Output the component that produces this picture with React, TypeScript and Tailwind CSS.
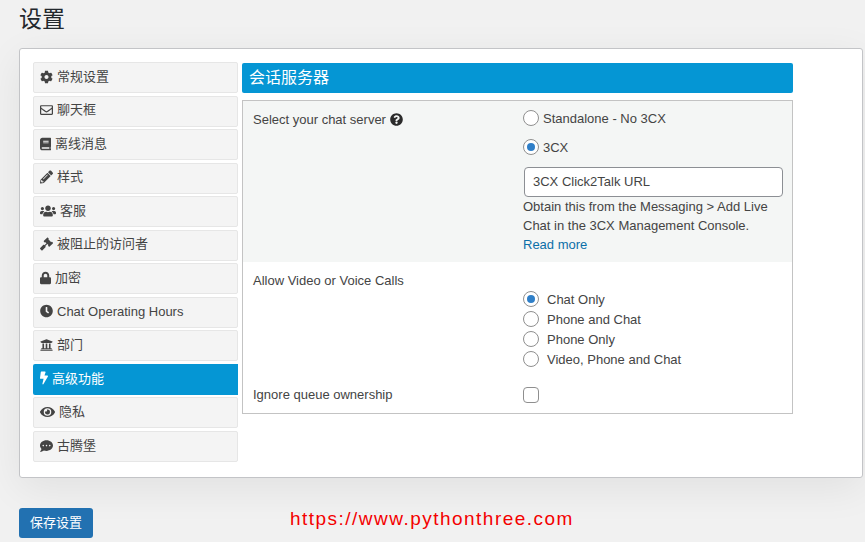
import { FaCog, FaRegEnvelope, FaBook, FaPencilAlt, FaUsers, FaGavel, FaLock, FaClock, FaUniversity, FaBolt, FaEye, FaCommentDots, FaQuestionCircle } from 'react-icons/fa';

const TABS = [
  { label: '常规设置', icon: FaCog, size: 'w-[13px] h-[14px]' },
  { label: '聊天框', icon: FaRegEnvelope, size: 'w-[13px] h-[14px]' },
  { label: '离线消息', icon: FaBook, size: 'w-[11px] h-[14px]' },
  { label: '样式', icon: FaPencilAlt, size: 'w-[13px] h-[14px]' },
  { label: '客服', icon: FaUsers, size: 'w-[16px] h-[14px]' },
  { label: '被阻止的访问者', icon: FaGavel, size: 'w-[13px] h-[14px]' },
  { label: '加密', icon: FaLock, size: 'w-[11px] h-[14px]' },
  { label: 'Chat Operating Hours', icon: FaClock, size: 'w-[13px] h-[14px]' },
  { label: '部门', icon: FaUniversity, size: 'w-[13px] h-[14px]' },
  { label: '高级功能', icon: FaBolt, size: 'w-[8px] h-[14px]', active: true },
  { label: '隐私', icon: FaEye, size: 'w-[15px] h-[14px]' },
  { label: '古腾堡', icon: FaCommentDots, size: 'w-[13px] h-[14px]' },
];

function Radio({ checked = false }: { checked?: boolean }) {
  return (
    <span className="flex h-4 w-4 shrink-0 items-center justify-center rounded-full border border-[#8f8f8f] bg-white">
      {checked && <span className="h-2 w-2 rounded-full bg-[#2f7fc8]" />}
    </span>
  );
}

export default function App() {
  return (
    <div
      className="h-[542px] w-[865px] overflow-hidden bg-[#f1f1f1] text-[13px] text-[#444]"
      style={{ fontFamily: '"Liberation Sans", "Noto Sans CJK SC", sans-serif' }}
    >
      <h1 className="ml-[19px] pt-[4px] text-[23px] leading-[31px] text-[#23282d]">设置</h1>

      <div className="ml-[19px] mt-[13px] flex h-[430px] w-[844px] items-start rounded-[3px] border border-[#c3c4c7] bg-white pl-[13px] pt-[13px] shadow-[0_10px_40px_rgba(0,0,0,0.07)]">
        {/* Tabs */}
        <div className="flex w-[205px] flex-col gap-[2.55px]">
          {TABS.map(({ label, icon: Icon, size, active }) => (
            <div
              key={label}
              className={
                active
                  ? 'flex h-[31px] items-center rounded-l-[2px] bg-[#0596d4] pb-[2px] pl-[7px] text-white'
                  : 'flex h-[31px] items-center rounded-[2px] border border-[#e6e6e6] bg-[#f4f4f4] pb-[2px] pl-[6px]'
              }
            >
              <Icon className={`${size} mr-[4px] shrink-0`} />
              <span>{label}</span>
            </div>
          ))}
        </div>

        {/* Content */}
        <div className="ml-[4px] mt-[1px] w-[551px]">
          <h3 className="flex h-[30px] items-center rounded-[2px] bg-[#0596d4] pb-[1px] pl-[7px] text-[16px] text-white">会话服务器</h3>

          <div className="mt-[7px] h-[314px] border border-[#c3c3c3]">
            <div className="flex h-[161px] bg-[#f4f6f5] pl-[10px]">
              <div className="mt-[9px] flex h-[18px] w-[270px] shrink-0 items-center gap-[4px]">
                <span className="pt-[2px]">Select your chat server</span>
                <FaQuestionCircle className="h-[13px] w-[13px] text-[#2b2b2b]" />
              </div>
              <div className="w-[262px] pt-[9px]">
                <label className="flex h-[16px] items-center gap-[4px]">
                  <Radio />
                  <span className="pt-[2px]">Standalone - No 3CX</span>
                </label>
                <label className="mt-[13px] flex h-[16px] items-center gap-[4px]">
                  <Radio checked />
                  <span className="pt-[2px]">3CX</span>
                </label>
                <div className="ml-[1px] mt-[12px] flex h-[30px] w-[259px] items-center rounded-[4px] border border-[#8c8f94] bg-white pl-[8px]">
                  3CX Click2Talk URL
                </div>
                <p className="leading-[19px]">
                  Obtain this from the Messaging &gt; Add Live Chat in the 3CX Management Console.
                  <br />
                  <a className="text-[#0b6fa8]">Read more</a>
                </p>
              </div>
            </div>

            <div className="flex pl-[10px]">
              <div className="mt-[10px] w-[270px] shrink-0 leading-[18px]">Allow Video or Voice Calls</div>
              <div className="mt-[29px] flex flex-col gap-[4px]">
                {['Chat Only', 'Phone and Chat', 'Phone Only', 'Video, Phone and Chat'].map((o, i) => (
                  <label key={o} className="flex h-[16px] items-center gap-[8px]">
                    <Radio checked={i === 0} />
                    <span className="pt-[2px]">{o}</span>
                  </label>
                ))}
              </div>
            </div>

            <div className="mt-[20px] flex items-center pl-[10px]">
              <div className="w-[270px] shrink-0 leading-[16px]">Ignore queue ownership</div>
              <span className="h-4 w-4 rounded-[4px] border border-[#8f8f8f] bg-white" />
            </div>
          </div>
        </div>
      </div>

      <div className="ml-[19px] mt-[30px] flex items-center">
        <button className="flex h-[30px] w-[74px] items-center justify-center rounded-[3px] bg-[#2271b1] text-[13px] text-white">保存设置</button>
        <span className="ml-[197px] mt-[-8px] text-[19px] tracking-[1.48px] text-[#f40000]">https://www.pythonthree.com</span>
      </div>
    </div>
  );
}
